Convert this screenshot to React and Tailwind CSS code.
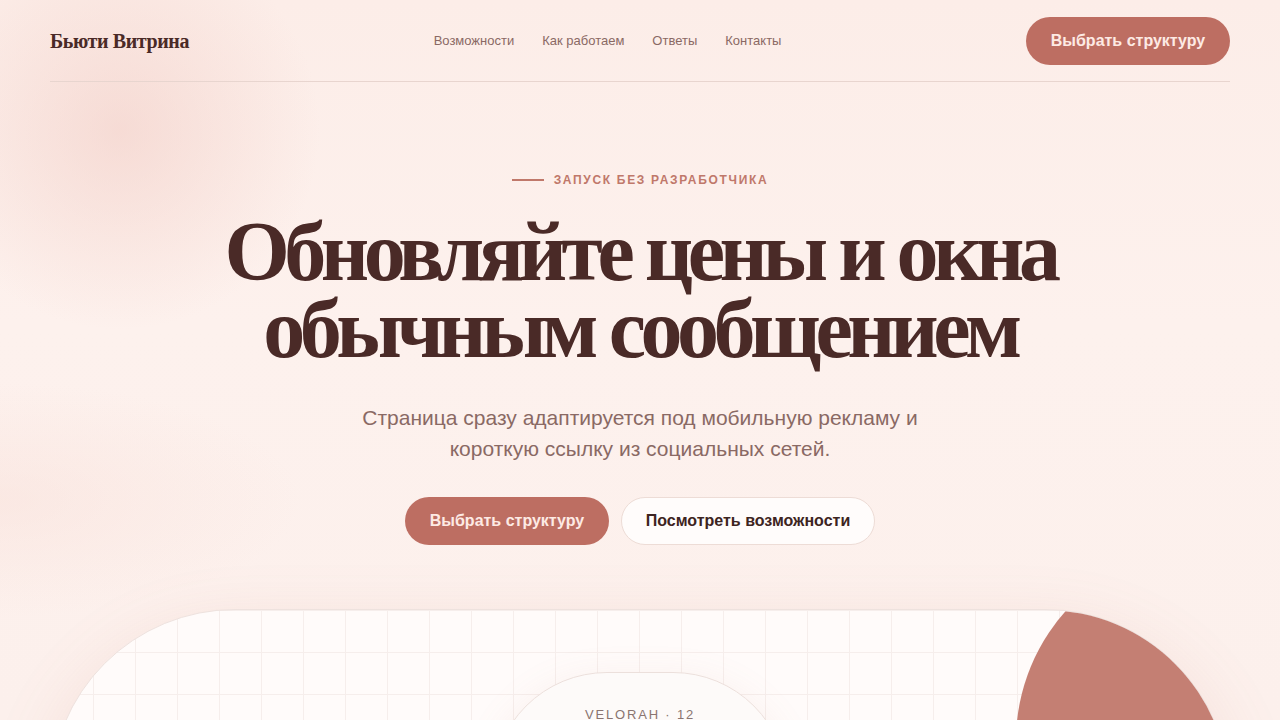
import React from 'react'

const navLinks = ['Возможности', 'Как работаем', 'Ответы', 'Контакты']

function Header() {
    return (
        <header className="mx-[50px] flex items-center justify-between border-b border-[#e8d5cf] pt-[17px] pb-4">
            <div className="font-['Liberation_Serif',serif] text-[20px] font-bold tracking-[-0.02em] text-[#4a2a27]">
                Бьюти Витрина
            </div>
            <nav className="flex items-center gap-7 text-[13px] text-[#8a6964]">
                {navLinks.map((link) => (
                    <a key={link} href="#" className="hover:text-[#4a2a27]">
                        {link}
                    </a>
                ))}
            </nav>
            <button className="h-12 w-[204px] rounded-full bg-[#bd6e62] text-[16px] font-bold text-[#fdeae4]">
                Выбрать структуру
            </button>
        </header>
    )
}

function Hero() {
    return (
        <section className="flex flex-col items-center pt-[89px] text-center">
            {/* Eyebrow */}
            <div className="flex items-center gap-[10px]">
                <span className="h-[2px] w-8 bg-[#c0786a]" />
                <span className="text-[12px] font-bold uppercase tracking-[0.14em] text-[#c0786a]">
                    Запуск без разработчика
                </span>
            </div>

            <h1 className="mt-[24px] font-['Liberation_Serif',serif] text-[84px] font-bold leading-[77px] tracking-[-0.065em] text-[#4a2a27]">
                Обновляйте цены и окна
                <br />
                обычным сообщением
            </h1>

            <p className="mt-[35px] max-w-[600px] text-[21px] leading-[31px] text-[#8a6964]">
                Страница сразу адаптируется под мобильную рекламу и короткую ссылку из социальных сетей.
            </p>

            <div className="mt-[33px] flex items-center gap-3">
                <button className="h-12 w-[204px] rounded-full bg-[#bd6e62] text-[16px] font-bold text-[#fdeae4]">
                    Выбрать структуру
                </button>
                <button className="h-12 w-[254px] rounded-full border border-[#eddcd6] bg-[#fffcfb] text-[16px] font-bold text-[#3d2421]">
                    Посмотреть возможности
                </button>
            </div>
        </section>
    )
}

function Preview() {
    return (
        <div className="relative mx-[50px] mt-[64px] h-[420px] overflow-hidden rounded-t-[185px] border border-[#eee2de] bg-[#fffbfa] bg-[linear-gradient(to_right,#f6eeec_1px,transparent_1px),linear-gradient(to_bottom,#f6eeec_1px,transparent_1px)] bg-[size:42px_42px] shadow-[0_20px_70px_rgba(200,120,105,0.14)]">
            {/* accent circle */}
            <div className="absolute left-[965px] top-[-64px] h-[390px] w-[390px] rounded-full bg-[#c47f73]" />

            {/* phone arch */}
            <div className="mx-auto mt-[62px] flex h-[300px] w-[296px] justify-center rounded-t-[115px] border border-[#ece0dc] bg-[#fdfaf9] pt-[32px] shadow-[0_10px_40px_rgba(200,130,115,0.12)]">
                <span className="text-[13px] tracking-[0.14em] text-[#8a7470]">VELORAH · 12</span>
            </div>
        </div>
    )
}

export default function App() {
    return (
        <div className="relative h-[720px] overflow-hidden bg-[#fcefeb] font-['Liberation_Sans',Arial,sans-serif]">
            {/* soft background blobs */}
            <div className="pointer-events-none absolute inset-0 bg-[radial-gradient(circle_at_120px_130px,rgba(240,200,192,0.5),transparent_200px),radial-gradient(ellipse_at_0px_500px,rgba(248,222,215,0.45),transparent_300px),linear-gradient(180deg,#fcede8_0%,#fdf1ed_45%,#fcf0ec_100%)]" />
            <div className="relative">
                <Header />
                <Hero />
                <Preview />
            </div>
        </div>
    )
}
